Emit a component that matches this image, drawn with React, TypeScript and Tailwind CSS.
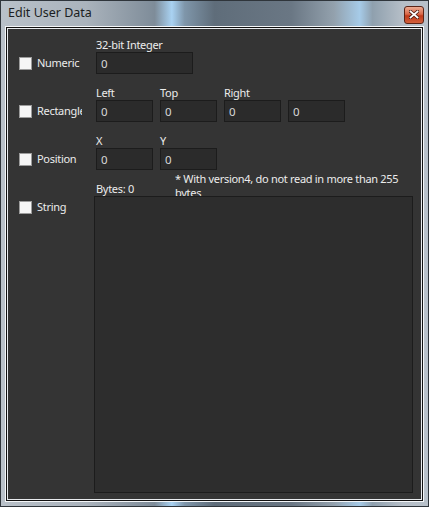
import React from "react";

const font = { fontFamily: '"Noto Sans", "Open Sans", sans-serif' };

function Check({ label }: { label: string }) {
  return (
    <div className="flex h-[22px] items-center pl-[11px]">
      <div className="h-[13px] w-[13px] shrink-0 border border-[#9c9c9c] bg-[#f6f6f6]" />
      <div className="ml-[5px] w-[45px] overflow-hidden whitespace-nowrap text-[11px] leading-[14px] tracking-[-0.3px] text-[#ececec]">
        {label}
      </div>
    </div>
  );
}

function Field({ label, w }: { label?: string; w: string }) {
  return (
    <div className={`flex flex-col ${w}`}>
      <div className="h-[14px] whitespace-nowrap text-[11px] leading-[14px] tracking-[-0.3px] text-[#ececec]">
        {label ?? ""}
      </div>
      <div className="flex h-[22px] items-center border border-[#1c1c1c] bg-[#2b2b2b] px-[4px] pt-[2px] text-[11.5px] text-[#d8d8d8]">
        0
      </div>
    </div>
  );
}

export default function App() {
  return (
    <div
      style={font}
      className="flex h-[507px] w-[429px] flex-col border border-[#2f353b] bg-[linear-gradient(90deg,#b9c1c9_0%,#aab3bc_20%,#7e8c99_36%,#a9d2f2_40%,#7f96aa_43%,#5f6d7a_50%,#6a7784_68%,#93a1ad_78%,#a6cbe8_84%,#8fa0ae_87%,#b5bec7_94%,#b8c1ca_100%)]"
    >
      {/* title bar */}
      <div className="flex h-[25px] shrink-0 items-center justify-between pl-[7px] pr-[4px]">
        <span className="text-[12.5px] text-[#1b1e22]">Edit User Data</span>
        <div className="mt-[2px] flex h-[18px] w-[20px] items-center justify-center rounded-[3px] border border-[#5b2417] bg-[linear-gradient(180deg,#ecab92_0%,#d9694a_45%,#c0391a_55%,#d2603c_100%)]">
          <svg width="10" height="9" viewBox="0 0 10 9">
            <path d="M1.5 1.5 L8.5 7.5 M8.5 1.5 L1.5 7.5" stroke="#4a1a12" strokeWidth="3.4" strokeLinecap="square" />
            <path d="M1.5 1.5 L8.5 7.5 M8.5 1.5 L1.5 7.5" stroke="#ffffff" strokeWidth="1.8" strokeLinecap="square" />
          </svg>
        </div>
      </div>

      {/* frame lines + client area */}
      <div className="mx-[4px] mb-[4px] flex-1 border border-[#f4f6f8]">
        <div className="h-full border border-[#111]">
          <div className="h-full border border-[#e8ebee]">
            <div className="flex h-full flex-col bg-[#343434] pt-[9px]">
              {/* Numeric */}
              <div className="flex">
                <div className="w-[88px] pt-[14px]">
                  <Check label="Numeric" />
                </div>
                <Field label="32-bit Integer" w="w-[97px]" />
              </div>

              {/* Rectangle */}
              <div className="mt-[12px] flex">
                <div className="w-[88px] pt-[14px]">
                  <Check label="Rectangle" />
                </div>
                <div className="flex gap-[7px]">
                  <Field label="Left" w="w-[57px]" />
                  <Field label="Top" w="w-[57px]" />
                  <Field label="Right" w="w-[57px]" />
                  <Field w="w-[57px]" />
                </div>
              </div>

              {/* Position */}
              <div className="mt-[12px] flex">
                <div className="w-[88px] pt-[14px]">
                  <Check label="Position" />
                </div>
                <div className="flex gap-[7px]">
                  <Field label="X" w="w-[57px]" />
                  <Field label="Y" w="w-[57px]" />
                </div>
              </div>

              {/* String */}
              <div className="mt-[2px] flex flex-1 pb-[6px]">
                <div className="w-[86px] pt-[24px]">
                  <Check label="String" />
                </div>
                <div className="flex w-[319px] flex-col">
                  <div className="flex h-[24px] items-end">
                    <div className="w-[81px] pl-[2px] text-[11px] leading-[14px] tracking-[-0.3px] text-[#ececec]">Bytes: 0</div>
                    <div className="h-[24px] w-[232px] overflow-hidden text-[11px] leading-[14px] tracking-[-0.3px] text-[#ececec]">
                      * With version4, do not read in more than 255 bytes
                    </div>
                  </div>
                  <div className="flex-1 border border-[#1c1c1c] bg-[#2d2d2d]" />
                </div>
              </div>
            </div>
          </div>
        </div>
      </div>
    </div>
  );
}
